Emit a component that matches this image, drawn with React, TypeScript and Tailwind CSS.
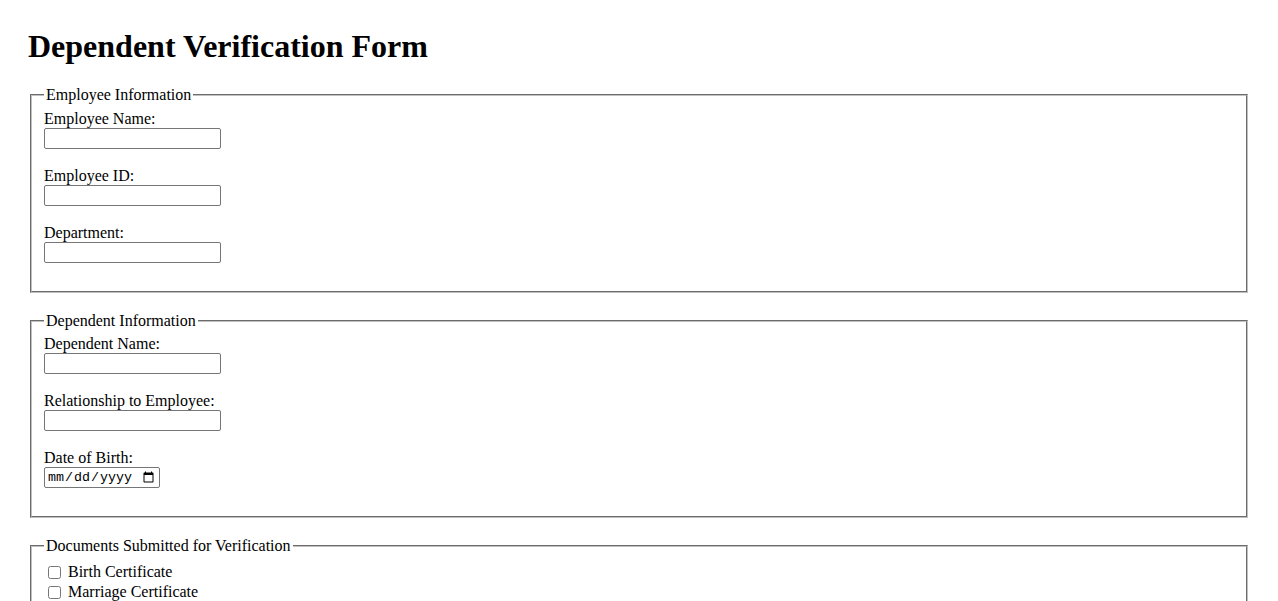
import React from "react";

const serif = { fontFamily: '"Liberation Serif", "Times New Roman", serif' };

function TextField({ label, type = "text" }: { label: string; type?: string }) {
  const isDate = type === "date";
  return (
    <div className="mb-[18px]">
      <label className="block leading-[18px]">{label}</label>
      <input
        type={type}
        className={
          "block h-[21px] border border-[#767676] rounded-[2px] bg-white px-[2px] py-[1px] text-[13.33px] " +
          (isDate ? "w-[116px]" : "w-[177px]")
        }
        style={{
          fontFamily: isDate
            ? '"Liberation Mono", "Courier New", monospace'
            : '"Liberation Sans", Arial, sans-serif',
        }}
      />
    </div>
  );
}

function Section({ title, children }: { title: string; children: React.ReactNode }) {
  return (
    <fieldset className="mx-[2px] mb-[18.5px] border-2 [border-style:groove] border-[#c0c0c0] px-[12px] pt-[5.6px] pb-[10px]">
      <legend className="px-[2px] leading-[18px]">{title}</legend>
      {children}
    </fieldset>
  );
}

export default function App() {
  return (
    <div className="bg-white text-black text-[16px] px-[28px] pt-[28px] pb-[20px] min-h-screen" style={serif}>
      <h1 className="text-[32px] font-bold leading-[37px] mb-[21.44px]">Dependent Verification Form</h1>
      <form>
        <Section title="Employee Information">
          <TextField label="Employee Name:" />
          <TextField label="Employee ID:" />
          <TextField label="Department:" />
        </Section>
        <Section title="Dependent Information">
          <TextField label="Dependent Name:" />
          <TextField label="Relationship to Employee:" />
          <TextField label="Date of Birth:" type="date" />
        </Section>
        <Section title="Documents Submitted for Verification">
          <div className="pt-[2px]">
            {["Birth Certificate", "Marriage Certificate", "Adoption Papers", "Legal Guardianship Documents"].map((d) => (
              <div key={d} className="flex items-center h-[20px]">
                <input type="checkbox" className="w-[13px] h-[13px] ml-[4px] mr-[7px]" />
                <label className="leading-[18px]">{d}</label>
              </div>
            ))}
          </div>
        </Section>
      </form>
    </div>
  );
}
